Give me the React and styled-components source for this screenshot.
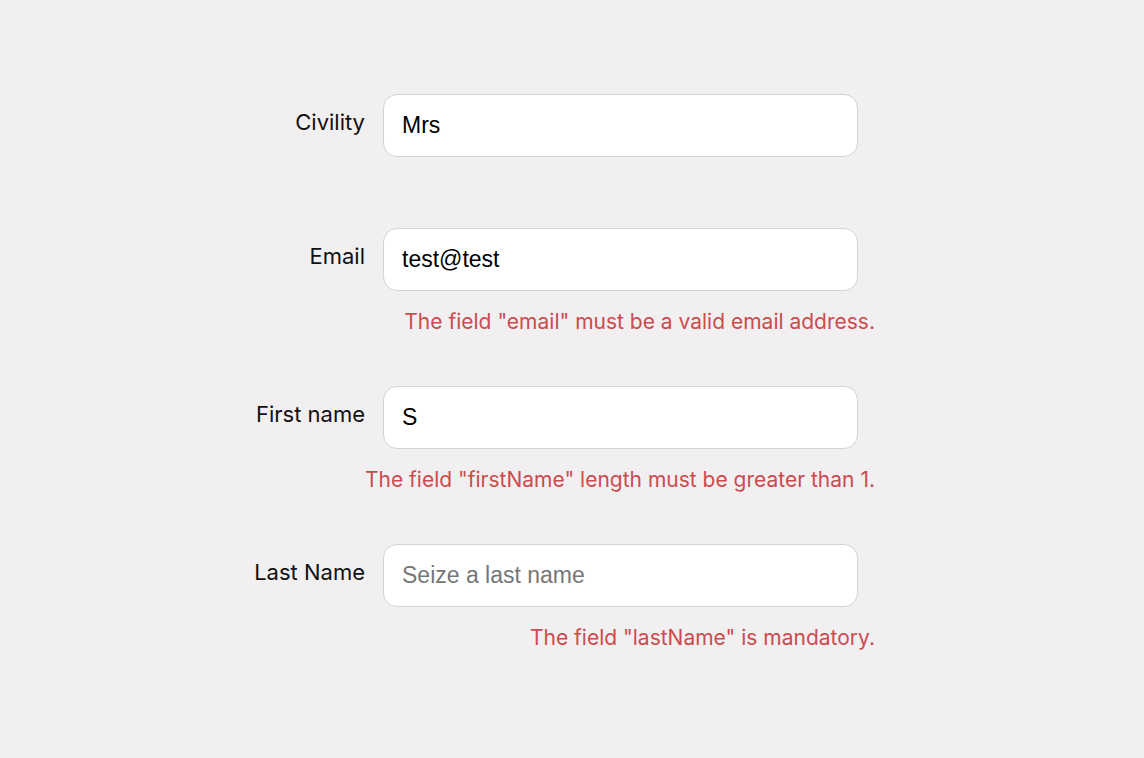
import React from "react";
import styled, { createGlobalStyle } from "styled-components";

const Global = createGlobalStyle`
  html, body { margin: 0; padding: 0; background: #f1eff0; }
  body { font-family: Inter, "Noto Sans", sans-serif; }
`;

const Page = styled.div`
  min-height: 758px;
  background: #f1eff0;
  padding-top: 94px;
  box-sizing: border-box;
`;

const Form = styled.form`
  display: grid;
  grid-template-columns: 365px 475px;
  column-gap: 18px;
  align-items: start;
`;

const Label = styled.label`
  grid-column: 1;
  text-align: right;
  font-family: Inter, sans-serif;
  font-size: 22px;
  line-height: 25px;
  color: #111;
  padding-top: 16px;
`;

const Field = styled.div`
  grid-column: 2;
  display: flex;
  flex-direction: column;
  margin-bottom: ${(p) => (p.$hasError ? 52 : 71)}px;
`;

const Input = styled.input`
  box-sizing: border-box;
  width: 475px;
  height: 63px;
  padding: 0 18px;
  border: 1px solid #d3d3d3;
  border-radius: 14px;
  background: #fff;
  font-family: "Liberation Sans", Arial, sans-serif;
  font-size: 23px;
  color: #000;
  outline: none;
  &::placeholder { color: #767676; }
`;

const Error = styled.div`
  align-self: flex-end;
  margin-right: -17px;
  margin-top: 19px;
  font-family: Inter, sans-serif;
  font-size: 21px;
  line-height: 24px;
  color: #cc4b4e;
  white-space: nowrap;
`;

const fields = [
  { label: "Civility", value: "Mrs" },
  { label: "Email", value: "test@test", error: 'The field "email" must be a valid email address.' },
  { label: "First name", value: "S", error: 'The field "firstName" length must be greater than 1.' },
  { label: "Last Name", value: "", placeholder: "Seize a last name", error: 'The field "lastName" is mandatory.' },
];

export default function App() {
  return (
    <Page>
      <Global />
      <Form onSubmit={(e) => e.preventDefault()}>
        {fields.map((f) => (
          <React.Fragment key={f.label}>
            <Label>{f.label}</Label>
            <Field $hasError={!!f.error}>
              <Input defaultValue={f.value} placeholder={f.placeholder} />
              {f.error && <Error>{f.error}</Error>}
            </Field>
          </React.Fragment>
        ))}
      </Form>
    </Page>
  );
}
